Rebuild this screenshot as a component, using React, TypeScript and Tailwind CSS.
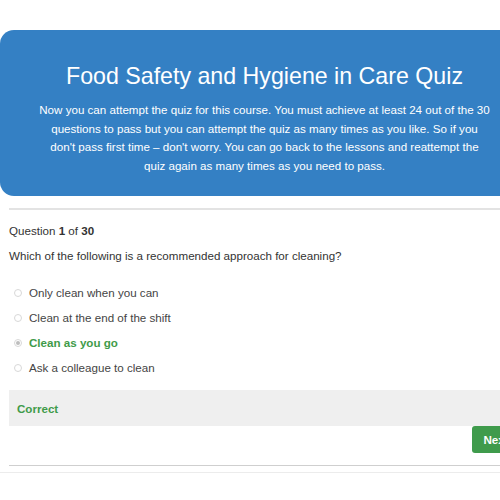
import React from 'react';

const options = [
  { label: 'Only clean when you can', correct: false },
  { label: 'Clean at the end of the shift', correct: false },
  { label: 'Clean as you go', correct: true },
  { label: 'Ask a colleague to clean', correct: false },
];

const Radio: React.FC<{ checked: boolean }> = ({ checked }) => (
  <span className="flex h-[8px] w-[8px] items-center justify-center rounded-full border border-[#d8d8d8] bg-white">
    {checked && <span className="h-[4px] w-[4px] rounded-full bg-[#bdbdbd]" />}
  </span>
);

const App: React.FC = () => {
  return (
    <div className="h-[500px] w-[500px] overflow-hidden bg-white font-['Liberation_Sans',Arial,sans-serif]">
      <div className="w-[529px] pt-[30px]">
        {/* Course banner */}
        <div className="flex h-[166px] flex-col items-center rounded-[14px] bg-[#3480c4] pt-[35px] text-white">
          <h1 className="text-[23.2px] leading-[23px]">Food Safety and Hygiene in Care Quiz</h1>
          <p className="mt-[13px] whitespace-nowrap text-center text-[11.6px] leading-[18.7px]">
            Now you can attempt the quiz for this course. You must achieve at least 24 out of the 30
            <br />
            questions to pass but you can attempt the quiz as many times as you like. So if you
            <br />
            don't pass first time – don't worry. You can go back to the lessons and reattempt the
            <br />
            quiz again as many times as you need to pass.
          </p>
        </div>

        <div className="px-[9px]">
          <div className="mt-[12px] h-[2px] bg-[#e3e3e3]" />

          <p className="mt-[12px] text-[11.6px] leading-[18.7px] text-[#333]">
            Question <b>1</b> of <b>30</b>
          </p>
          <p className="mt-[6px] text-[11.6px] leading-[18.7px] text-[#333]">
            Which of the following is a recommended approach for cleaning?
          </p>

          {/* Answers */}
          <ul className="mt-[15px]">
            {options.map((opt) => (
              <li key={opt.label} className="flex h-[25px] items-center">
                <span className="ml-[5px] mr-[7px]">
                  <Radio checked={opt.correct} />
                </span>
                <span
                  className={
                    opt.correct
                      ? 'text-[11.6px] font-bold leading-[18.7px] text-[#3f9b4a]'
                      : 'text-[11.6px] leading-[18.7px] text-[#444]'
                  }
                >
                  {opt.label}
                </span>
              </li>
            ))}
          </ul>

          <div className="mt-[10px] flex h-[36px] items-center bg-[#efefef] px-[8px]">
            <span className="text-[11.6px] font-bold text-[#3f9b4a]">Correct</span>
          </div>

          <div className="flex justify-end">
            <button className="h-[27px] w-[48px] rounded-[3px] bg-[#3f9b4c] text-[11.6px] font-bold text-white">
              Next
            </button>
          </div>

          <div className="mt-[12px] h-px bg-[#cfcfcf]" />
        </div>
      </div>
      <div className="mt-[6px] h-px bg-[#ececec]" />
    </div>
  );
};

export default App;
